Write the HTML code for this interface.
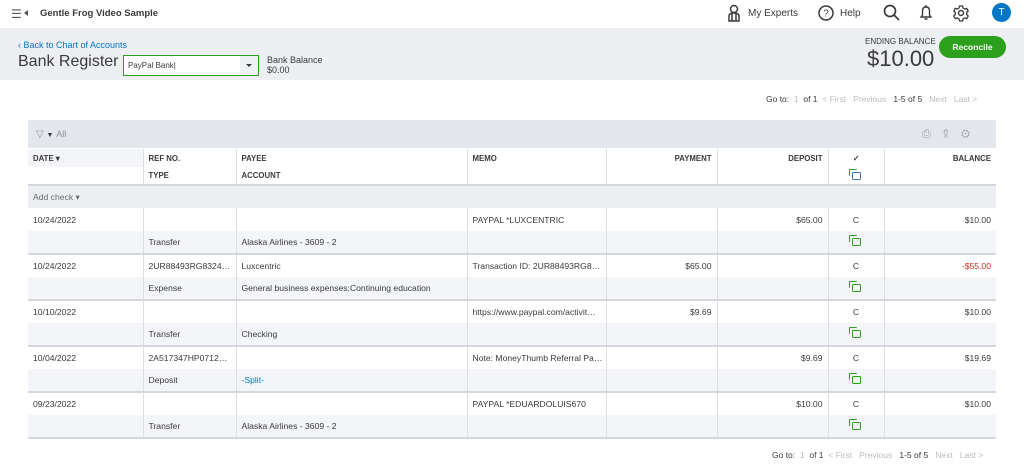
<!DOCTYPE html>
<html><head><meta charset="utf-8"><style>
*{margin:0;padding:0;box-sizing:border-box}
body{width:1024px;height:465px;overflow:hidden;background:#fff;font-family:"Liberation Sans",sans-serif;color:#393a3d;position:relative}
.a{position:absolute}
.top{left:0;top:0;width:1024px;height:28px;background:#fff}
.band{left:0;top:28px;width:1024px;height:52px;background:#eceef1}
table{position:absolute;left:28px;top:149px;border-collapse:collapse;table-layout:fixed;width:968px;font-size:8.6px}
td{border-left:1px solid #dcdee2;padding:0 5px;height:23px;white-space:nowrap;overflow:hidden}
td:first-child{border-left:none}
.r{text-align:right}.c{text-align:center}
tr.sub td{background:#f4f5f8}
tr.sub{border-bottom:2px solid #d4d7dc}
.hd td{font-weight:bold;font-size:7.8px;height:18px;color:#393a3d}
.pg{font-size:8.5px;color:#bbb}
.pg b{color:#393a3d;font-weight:normal}
.ic{display:inline-block;width:9px;height:8px;border:1.5px solid #2ca01c;border-radius:1.5px;position:relative;top:1px}
.ic:before{content:"";position:absolute;left:-4px;top:-4px;width:7px;height:6px;border-left:1.5px solid #2ca01c;border-top:1.5px solid #2ca01c;border-radius:1px}
</style></head><body>
<div class="a top"></div>
<div class="a" style="left:11px;top:7px;font-size:12px;color:#555">☰</div>
<div class="a" style="left:24px;top:10px;width:0;height:0;border-top:3px solid transparent;border-bottom:3px solid transparent;border-right:4px solid #555"></div>
<div class="a" style="left:40px;top:8px;font-size:9.5px;font-weight:bold;color:#393a3d">Gentle Frog Video Sample</div>
<svg class="a" style="left:727px;top:4px" width="14" height="18" viewBox="0 0 14 18"><circle cx="7" cy="5" r="3.5" fill="none" stroke="#393a3d" stroke-width="1.5"/><path d="M2 17V12Q2 9 7 9Q12 9 12 12V17ZM5 9V17M9 9V17" fill="none" stroke="#393a3d" stroke-width="1.5"/></svg>
<div class="a" style="left:748px;top:8px;font-size:10px">My Experts</div>
<svg class="a" style="left:818px;top:5px" width="16" height="16"><circle cx="8" cy="8" r="7" fill="none" stroke="#393a3d" stroke-width="1.5"/><text x="8" y="11.5" font-size="10" text-anchor="middle" fill="#393a3d" font-family="Liberation Sans">?</text></svg>
<div class="a" style="left:840px;top:8px;font-size:10px">Help</div>
<svg class="a" style="left:883px;top:4px" width="17" height="17"><circle cx="7" cy="7" r="5.5" fill="none" stroke="#393a3d" stroke-width="1.7"/><path d="M11 11L16 16" stroke="#393a3d" stroke-width="1.8"/></svg>
<svg class="a" style="left:919px;top:4px" width="14" height="18"><path d="M2 13H12L10.5 11V7Q10.5 3 7 3Q3.5 3 3.5 7V11ZM5.5 15H8.5M7 1V3" fill="none" stroke="#393a3d" stroke-width="1.4"/></svg>
<svg class="a" style="left:952px;top:4px" width="18" height="18" viewBox="0 0 18 18"><circle cx="9" cy="9" r="2.5" fill="none" stroke="#393a3d" stroke-width="1.4"/><path d="M7.5 2h3l.5 2 1.7 1 2-.6 1.5 2.6-1.5 1.5v2l1.5 1.5-1.5 2.6-2-.6-1.700 1-.5 2h-3l-.5-2-1.7-1-2 .6-1.5-2.6 1.5-1.5v-2L1.8 7l1.5-2.6 2 .6 1.7-1z" fill="none" stroke="#393a3d" stroke-width="1.3"/></svg>
<div class="a" style="left:992px;top:3px;width:19px;height:19px;border-radius:50%;background:#0077c5;color:#fff;font-size:10px;text-align:center;line-height:19px">T</div>
<div class="a band"></div>
<div class="a" style="left:18px;top:40px;font-size:9px;color:#0077c5">‹ Back to Chart of Accounts</div>
<div class="a" style="left:18px;top:53px;font-size:16px;color:#393a3d">Bank Register</div>
<div class="a" style="left:123px;top:55px;width:136px;height:21px;border:1px solid #2ca01c;background:#fff;font-size:8px;padding:5px 4px">PayPal Bank|</div>
<div class="a" style="left:240px;top:56px;width:18px;height:19px;background:#eef0f2"></div>
<div class="a" style="left:246px;top:64px;border-left:3px solid transparent;border-right:3px solid transparent;border-top:3px solid #393a3d"></div>
<div class="a" style="left:267px;top:55px;font-size:9px;line-height:10px">Bank Balance<br>$0.00</div>
<div class="a" style="left:865px;top:37px;font-size:8px">ENDING BALANCE</div>
<div class="a" style="left:867px;top:46px;font-size:22px">$10.00</div>
<div class="a" style="left:939px;top:36px;width:67px;height:22px;border-radius:11px;background:#2ca01c;color:#fff;font-size:8.5px;font-weight:bold;text-align:center;line-height:22px">Reconcile</div>
<div class="a pg" style="left:766px;top:94px"><b>Go to:</b> &nbsp;1 &nbsp;<b>of 1</b> &nbsp;&lt; First &nbsp; Previous &nbsp; <b>1-5 of 5</b> &nbsp; Next &nbsp; Last &gt;</div>
<div class="a" style="left:28px;top:120px;width:968px;height:28px;background:#e3e6ea"></div>
<div class="a" style="left:36px;top:129px;font-size:10px;color:#8d9096">▽ <span style="font-size:7px;color:#393a3d">▼</span> <span style="font-size:9px">All</span></div>
<div class="a" style="left:922px;top:128px;font-size:11px;color:#a0a3a8;letter-spacing:12px">⎙⇪⚙</div>
<table>
<colgroup><col style="width:115px"><col style="width:93px"><col style="width:231px"><col style="width:139px"><col style="width:111px"><col style="width:111px"><col style="width:56px"><col style="width:112px"></colgroup>
<tr class="hd"><td style="background:#f4f5f8">DATE ▾</td><td>REF NO.</td><td>PAYEE</td><td>MEMO</td><td class="r">PAYMENT</td><td class="r">DEPOSIT</td><td class="c">✓</td><td class="r">BALANCE</td></tr>
<tr class="hd" style="border-bottom:2px solid #d4d7dc"><td></td><td>TYPE</td><td>ACCOUNT</td><td></td><td></td><td></td><td class="c"><span class="ic" style="border-color:#4a6fa5"></span></td><td></td></tr>
<tr><td colspan="8" style="background:#eceef1;height:23px;color:#6b6c72">Add check ▾</td></tr>
<tr><td>10/24/2022</td><td></td><td></td><td>PAYPAL *LUXCENTRIC</td><td></td><td class="r">$65.00</td><td class="c">C</td><td class="r">$10.00</td></tr>
<tr class="sub"><td></td><td>Transfer</td><td>Alaska Airlines - 3609 - 2</td><td></td><td></td><td></td><td class="c"><span class="ic"></span></td><td></td></tr>
<tr><td>10/24/2022</td><td>2UR88493RG8324…</td><td>Luxcentric</td><td>Transaction ID: 2UR88493RG8…</td><td class="r">$65.00</td><td></td><td class="c">C</td><td class="r" style="color:#d52b1e">-$55.00</td></tr>
<tr class="sub"><td></td><td>Expense</td><td>General business expenses:Continuing education</td><td></td><td></td><td></td><td class="c"><span class="ic"></span></td><td></td></tr>
<tr><td>10/10/2022</td><td></td><td></td><td>https://www.paypal.com/activit…</td><td class="r">$9.69</td><td></td><td class="c">C</td><td class="r">$10.00</td></tr>
<tr class="sub"><td></td><td>Transfer</td><td>Checking</td><td></td><td></td><td></td><td class="c"><span class="ic"></span></td><td></td></tr>
<tr><td>10/04/2022</td><td>2A517347HP0712…</td><td></td><td>Note: MoneyThumb Referral Pa…</td><td></td><td class="r">$9.69</td><td class="c">C</td><td class="r">$19.69</td></tr>
<tr class="sub"><td></td><td>Deposit</td><td style="color:#0077c5">-Split-</td><td></td><td></td><td></td><td class="c"><span class="ic"></span></td><td></td></tr>
<tr><td>09/23/2022</td><td></td><td></td><td>PAYPAL *EDUARDOLUIS670</td><td></td><td class="r">$10.00</td><td class="c">C</td><td class="r">$10.00</td></tr>
<tr class="sub"><td></td><td>Transfer</td><td>Alaska Airlines - 3609 - 2</td><td></td><td></td><td></td><td class="c"><span class="ic"></span></td><td></td></tr>
</table>
<div class="a pg" style="left:772px;top:450px"><b>Go to:</b> &nbsp;1 &nbsp;<b>of 1</b> &nbsp;&lt; First &nbsp; Previous &nbsp; <b>1-5 of 5</b> &nbsp; Next &nbsp; Last &gt;</div>
</body></html>
